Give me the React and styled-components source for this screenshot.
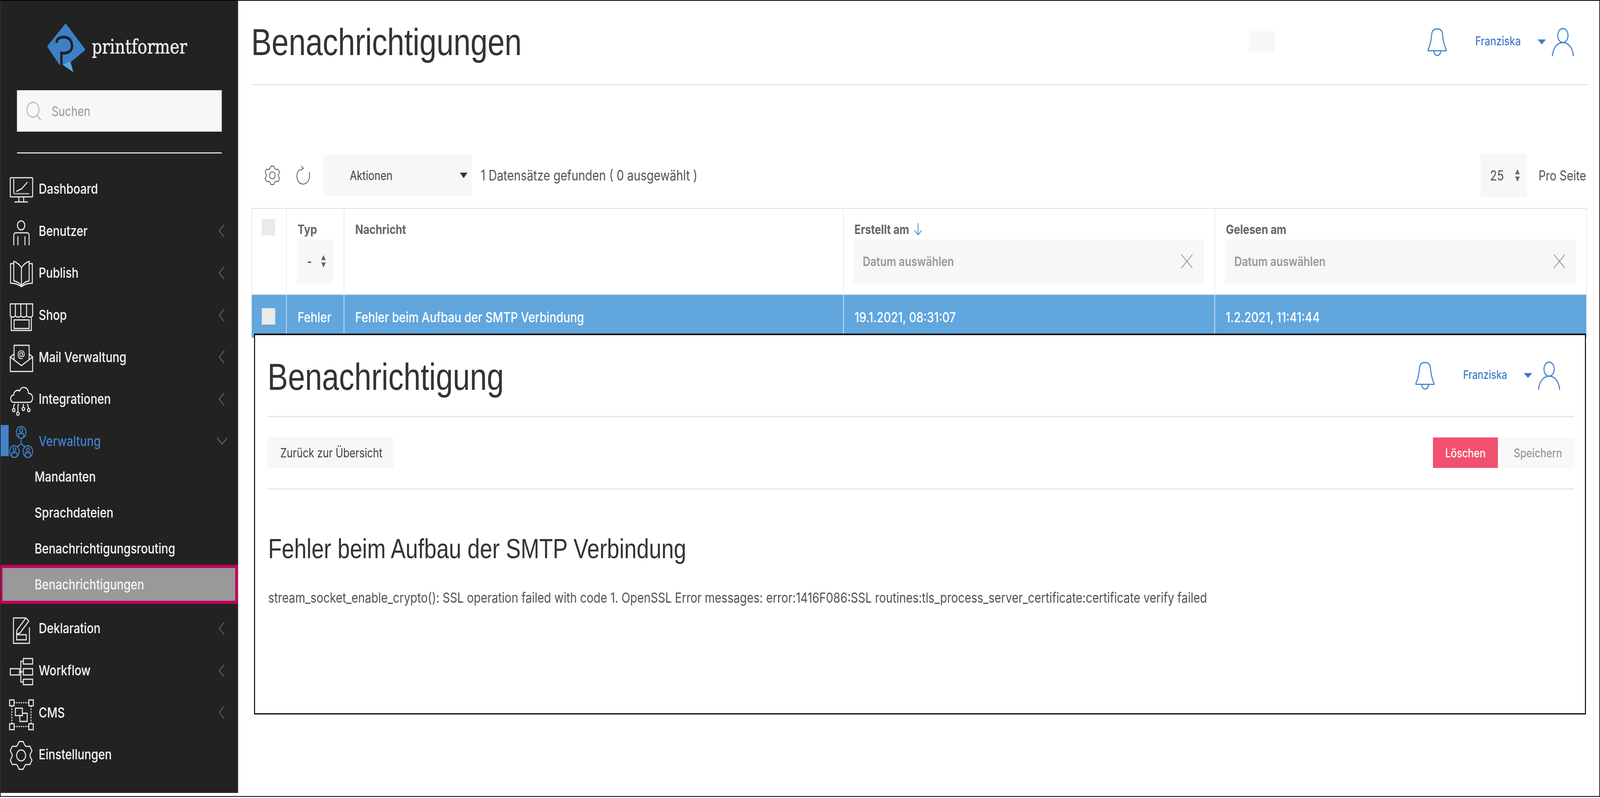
import React from "react";
import styled, { createGlobalStyle } from "styled-components";

const Global = createGlobalStyle`
  html, body { margin: 0; padding: 0; background: #fff; overflow: hidden; }
  body { font-family: Inter, "Liberation Sans", sans-serif; color: #555; }
  * { box-sizing: border-box; }
`;

const Stage = styled.div`width: 100vw; height: 100vh; overflow: hidden;`;
const Frame = styled.div`
  position: relative; display: flex; align-items: flex-start; transform-origin: 0 0;
  width: 5000px; height: 2040px; border: 2px solid #000; background: #fff; overflow: hidden;
`;
const Sidebar = styled.aside`
  flex: none; width: 742px; height: 2028px; background: #222; display: flex; flex-direction: column;
`;
const LogoRow = styled.div`
  display: flex; align-items: flex-start; height: 229px; padding: 50px 0 0 138px;
`;
const LogoMark = styled.svg`flex: none; width: 140px; height: 140px;`;
const LogoText = styled.span`
  font-family: "DejaVu Serif", serif; font-size: 50px; line-height: 60px; color: #f2f2f2;
  margin: 38px 0 0 7px; -webkit-text-stroke: 0.6px #f2f2f2;
`;
const SearchWrap = styled.div`
  display: flex; align-items: center; margin: 0 51px; height: 106px; background: #f7f7f7; padding-left: 29px;
`;
const SearchLabel = styled.span`font-size: 34px; color: #999; margin-left: 32px;`;
const Rule = styled.div`height: 3px; margin: 53px 51px 0; background: #ddd;`;
const Nav = styled.nav`display: flex; flex-direction: column; margin-top: 37px;`;
const NavRow = styled.div`
  position: relative; display: flex; align-items: center; height: 107.6px; padding-left: 27px;
  color: ${(p) => (p.$active ? "#3f80c8" : "#f4f4f4")}; font-size: 35.5px; font-weight: 500;
`;
const Marker = styled.span`
  position: absolute; left: 0; top: 12px; width: 25px; height: 80px; background: #4284c9;
`;
const NavIcon = styled.svg`
  flex: none; width: 76px; height: 76px; overflow: visible; fill: none;
  stroke: ${(p) => (p.$active ? "#3f80c8" : "#ececec")}; stroke-width: 3;
`;
const AtSign = styled.text`
  font-family: Inter, sans-serif; font-size: 24px; fill: #ececec; stroke: none; text-anchor: middle;
`;
const NavLabel = styled.span`margin-left: 16px; flex: 1;`;
const Chev = styled.svg`flex: none; margin-right: 40px; width: 22px; height: 36px; fill: none; stroke: #6f6f6f; stroke-width: 2.2;`;
const ChevDown = styled.svg`flex: none; margin-right: 32px; width: 36px; height: 22px; fill: none; stroke: #777; stroke-width: 2.2;`;
const SubList = styled.div`display: flex; flex-direction: column; margin: -9px 0 13px;`;
const SubRow = styled.div`
  display: flex; align-items: center; height: 92px; padding-left: 106px;
  font-size: 35.5px; font-weight: 500; color: #f4f4f4;
`;
const SubRowMarked = styled(SubRow)`
  height: 100px; margin: -4px 0 -4px -2px; width: 743px;
  background: #999; border: 8px solid #c2005c; padding-left: 100px;
`;

const Main = styled.main`
  flex: 1; min-width: 0; display: flex; flex-direction: column; padding: 0 35px 0 41px;
`;
const PageHead = styled.header`
  display: flex; align-items: center; height: 216px; border-bottom: 3px solid #e6e6e6; padding-bottom: 2px;
`;
const PageTitle = styled.h1`
  flex: 1; margin: 0; font-family: "Liberation Sans", Arial, sans-serif; font-weight: 400;
  font-size: 96px; color: #333; line-height: 120px; letter-spacing: -0.2px;
`;
const OverlayTitle = styled(PageTitle)`margin-top: 6px;`;
const Blank = styled.div`flex: none; width: 80px; height: 55px; background: #f7f7f7; margin-right: 478px;`;
const Bell = styled.svg`flex: none; width: 60px; height: 72px; fill: none; stroke: #3f80c8; stroke-width: 3.2; overflow: visible;`;
const UserName = styled.span`
  flex: none; color: #3f80c8; font-size: ${(p) => p.$size}px; font-weight: 500; margin: 0 0 6px 89px;
  width: ${(p) => p.$width}px; white-space: nowrap;
`;
const Caret = styled.svg`flex: none; width: 26px; height: 13px; fill: #3f80c8; margin-left: 50px;`;
const UserIcon = styled.svg`flex: none; width: 72px; height: 72px; fill: none; stroke: #3f80c8; stroke-width: 3.2; margin-left: 17px; margin-right: 43px; overflow: visible;`;

const Toolbar = styled.div`display: flex; align-items: center; margin-top: 178px; height: 106px;`;
const ToolIcon = styled.svg`flex: none; fill: none; stroke: #555; stroke-width: 2.2; width: 48px; height: 50px; margin-left: ${(p) => p.$gap}px; overflow: visible;`;
const ActionSelect = styled.div`
  flex: none; display: flex; align-items: center; justify-content: space-between;
  width: 464px; height: 106px; margin-left: 40px; background: #f7f7f7; padding: 0 14px 0 82px;
  font-size: 32px; color: #444; font-weight: 400;
`;
const BlackCaret = styled.svg`flex: none; width: 24px; height: 14px; fill: #333;`;
const Found = styled.span`flex: 1; margin-left: 27px; font-size: 36.2px; color: #555;`;
const PerPage = styled.div`
  flex: none; display: flex; align-items: center; width: 145px; height: 111px; background: #f7f7f7;
  padding-left: 29px; font-size: 36px; color: #555;
`;
const Updown = styled.svg`flex: none; width: 18px; height: 32px; fill: #666; margin-left: ${(p) => p.$gap}px;`;
const PerLabel = styled.span`flex: none; margin-left: 36px; font-size: 35px; color: #555; width: 155px; white-space: nowrap;`;

const Table = styled.div`
  margin: 30px 4px 0 0; border: solid #e8e8e8; border-width: 3px 2px 0 2px;
  display: grid; grid-template-columns: 107px 180px 1561px 1160px 1fr;
`;
const HeadCell = styled.div`
  height: 220px; padding: 32px ${(p) => p.$right || 33}px 0 ${(p) => p.$pad || 32}px;
  border-left: ${(p) => (p.$first ? 0 : "2px solid #e6e6e6")};
  border-bottom: 3px solid #e6e6e6;
`;
const CheckHead = styled(HeadCell)`padding: 26px 0 0 31px;`;
const Check = styled.div`width: 42px; height: 42px; background: #eaeaea;`;
const HeadLabel = styled.div`
  display: flex; align-items: center; height: 40px; font-size: 33px; font-weight: 700; color: #666; padding-left: 2px;
`;
const SortArrow = styled.svg`flex: none; width: 26px; height: 32px; fill: none; stroke: #4a8ccf; stroke-width: 2.4; margin-left: 15px;`;
const TypeFilter = styled.div`
  display: flex; align-items: center; width: 113px; height: 112px; margin-top: 6px; background: #f7f7f7;
  padding-left: 32px; font-size: 30px; color: #555; font-weight: 700;
`;
const DateFilter = styled.div`
  display: flex; align-items: center; justify-content: space-between; height: 112px; margin-top: 6px; background: #f7f7f7;
  padding: 0 35px 0 28px; font-size: 33px; font-weight: 600; color: #999;
`;
const XMark = styled.svg`flex: none; width: 36px; height: 36px; stroke: #888; stroke-width: 2; fill: none;`;
const BodyCell = styled.div`
  display: flex; align-items: flex-start; height: 110px; background: #61a6dc; color: #fff;
  font-size: 35.5px; font-weight: 500; padding: 36px 0 0 ${(p) => p.$pad || 34}px;
  border-left: ${(p) => (p.$first ? 0 : "2px solid #d3e6f6")};
`;
const BodyCheck = styled(BodyCell)`padding: 34px 0 0 31px;`;

const Overlay = styled.section`
  position: absolute; left: 792px; top: 852px; width: 4162px; height: 975px; background: #fff;
  border: 3px solid #000; border-top-width: 4px; display: flex; flex-direction: column; padding: 0 33px 0 39px;
`;
const OverHead = styled.header`
  display: flex; align-items: center; height: 210px; border-bottom: 3px solid #e6e6e6;
`;
const ButtonBar = styled.div`
  display: flex; align-items: center; height: 185px; border-bottom: 3px solid #e6e6e6;
`;
const BackButton = styled.div`
  flex: none; height: 79px; display: flex; align-items: center; padding: 0 40px; background: #f7f7f7;
  font-size: 32px; color: #444; width: 394px; white-space: nowrap; margin-right: auto;
`;
const Danger = styled.div`
  flex: none; height: 78px; width: 203px; display: flex; align-items: center; justify-content: center;
  background: #f25070; color: #fff; font-size: 31px; font-weight: 500;
`;
const Save = styled.div`
  flex: none; height: 78px; width: 228px; margin-left: 11px; display: flex; align-items: center; justify-content: center;
  background: #f8f8f8; color: #999; font-size: 31px; font-weight: 500;
`;
const Heading = styled.h2`
  margin: 110px 0 0; font-family: "Liberation Sans", Arial, sans-serif; font-weight: 400; font-size: 69.6px;
  line-height: 84px; color: #333; padding-left: 2px;
`;
const Message = styled.p`margin: 61px 0 0; font-size: 35.7px; line-height: 44px; color: #555; padding-left: 2px; white-space: nowrap;`;

function gearPath(cx, cy, R) {
  const pt = (deg, r) => {
    const a = (deg * Math.PI) / 180;
    return `${(cx + r * Math.cos(a)).toFixed(2)} ${(cy + r * Math.sin(a)).toFixed(2)}`;
  };
  let d = "";
  for (let i = 0; i < 6; i++) {
    const a = i * 60 - 90;
    d += `${i === 0 ? "M" : "L"}${pt(a - 20, R * 0.84)} L${pt(a - 10, R)} L${pt(a + 10, R)} L${pt(a + 20, R * 0.84)} Q${pt(a + 30, R * 0.72)} ${pt(a + 40, R * 0.84)} `;
  }
  return d + "Z";
}

const Person = ({ x, y }) => (
  <g>
    <circle cx={x} cy={y} r="15" />
    <circle cx={x} cy={y - 5} r="4.5" />
    <path d={`M${x - 8} ${y + 13} V${y + 3} H${x + 8} V${y + 13}`} />
  </g>
);

const icons = {
  Dashboard: (
    <>
      <rect x="3" y="9" width="70" height="49" rx="2" />
      <path d="M14 12V49" />
      <path d="M14 50H62" strokeWidth="3.6" stroke="#aaa" />
      <path d="M22 44L39 37L57 20" />
      <path d="M30 58V71M45 58V71M16 71H58" />
    </>
  ),
  Benutzer: (
    <>
      <circle cx="37" cy="24" r="11.5" />
      <path d="M14 75V50Q14 43 21 43H55Q62 43 62 50V75M27 52V75M49 52V75" />
    </>
  ),
  Publish: (
    <>
      <path d="M38 24Q28 12 14 8V58Q28 60 38 70Q48 60 62 58V8Q48 12 38 24ZM38 24V70" />
      <path d="M14 14H4V64Q24 64 38 73Q52 64 72 64V14H62" />
    </>
  ),
  Shop: (
    <>
      <path d="M3 9H73V40Q64 46 54 40Q45 46 36 40Q28 46 19 40Q10 46 3 40ZM19 9V40M36 9V40M54 9V40" />
      <path d="M6 44V77H69V44" />
      <rect x="15" y="50" width="47" height="22" />
    </>
  ),
  "Mail Verwaltung": (
    <>
      <path d="M15 30L3 38V75H73V38L62 30M3 38L38 60L73 38" />
      <path d="M15 45V8H62V45" />
      <AtSign x="37" y="38">@</AtSign>
    </>
  ),
  Integrationen: (
    <>
      <path d="M14 46C2 46 0 28 14 27C14 16 27 13 32 17C38 2 60 6 60 23C76 22 78 46 62 46Z" />
      <path d="M14 62V54L18 50M27 71V54L30 50M44 59V50M61 62L56 50" />
      <circle cx="14" cy="66" r="4" />
      <circle cx="27" cy="75" r="4" />
      <circle cx="44" cy="63" r="4" />
      <circle cx="61" cy="66" r="4" />
    </>
  ),
  Verwaltung: (
    <>
      <Person x={37} y={16} />
      <Person x={16} y={65} />
      <Person x={58} y={65} />
      <path d="M37 31V45L25 53M37 45L49 53" />
    </>
  ),
  Deklaration: (
    <>
      <path d="M50 11H13V76H63V35" />
      <path d="M24 42L52 11L61 19L33 50L23 52Z" />
      <rect x="23" y="54" width="30" height="13" />
    </>
  ),
  Workflow: (
    <>
      <rect x="3" y="33" width="29" height="16" />
      <rect x="44" y="7" width="29" height="14" />
      <rect x="44" y="33" width="29" height="16" />
      <rect x="44" y="60" width="29" height="14" />
      <path d="M44 14H36V67H44M32 41H44" />
    </>
  ),
  CMS: (
    <>
      <rect x="1" y="6" width="14" height="15" />
      <rect x="61" y="6" width="14" height="15" />
      <rect x="1" y="67" width="14" height="15" />
      <rect x="61" y="67" width="14" height="15" />
      <path d="M15 13H61M15 74H61M8 21V67M68 21V67" strokeDasharray="4 3" />
      <rect x="19" y="27" width="22" height="19" />
      <path d="M41 40H56V61H33V46" />
    </>
  ),
  Einstellungen: (
    <>
      <path d={gearPath(37, 40, 36)} />
      <circle cx="37" cy="40" r="14" />
    </>
  ),
};

const LeftChevron = () => (
  <Chev viewBox="0 0 22 36"><path d="M19 2L3 18L19 34" /></Chev>
);
const UpDown = ({ gap }) => (
  <Updown $gap={gap} viewBox="0 0 18 32"><path d="M9 0L16 13H2ZM2 19H16L9 32Z" /></Updown>
);
const CloseX = () => (
  <XMark viewBox="0 0 36 36"><path d="M1 1L35 35M35 1L1 35" /></XMark>
);
const UserBlock = ({ width, size }) => (
  <>
    <Bell viewBox="0 0 58 72">
      <path d="M1 58H57V54C52 46 47 30 46 16C45 6 38 2 29 2C20 2 13 6 12 16C11 30 6 46 1 54Z" />
      <path d="M19 58C19 74 40 74 40 58" />
    </Bell>
    <UserName $width={width} $size={size}>Franziska</UserName>
    <Caret viewBox="0 0 26 13"><path d="M0 0H26L13 13Z" /></Caret>
    <UserIcon viewBox="0 0 72 72">
      <ellipse cx="36" cy="19" rx="16" ry="18" />
      <path d="M3 72C5 50 19 37 36 37C53 37 67 50 69 72" />
    </UserIcon>
  </>
);

const MainItem = ({ label, chevron, active }) => (
  <NavRow $active={active}>
    {active && <Marker />}
    <NavIcon $active={active} viewBox="0 0 76 76">{icons[label]}</NavIcon>
    <NavLabel>{label}</NavLabel>
    {chevron && <LeftChevron />}
    {active && <ChevDown viewBox="0 0 36 22"><path d="M2 3L18 19L34 3" /></ChevDown>}
  </NavRow>
);

export default function App() {
  const fit = Math.min(1, window.innerWidth / 5000);
  return (
    <>
      <Global />
      <Stage>
        <Frame style={{ transform: `scaleX(${fit})` }}>
          <Sidebar>
            <LogoRow>
              <LogoMark viewBox="0 0 140 140">
                <path d="M65 12L11 67L50 114L80 104L123 75Z" fill="#3d80c6" stroke="#3d80c6" strokeWidth="6" strokeLinejoin="round" />
                <path d="M58 114L79 106L88 131Z" fill="#5aa9e3" stroke="#5aa9e3" strokeWidth="1.5" strokeLinejoin="round" />
                <path d="M37 58C36 47 47 43 60 43C76 43 85 53 85 66C85 80 72 85 52 84V120" fill="none" stroke="#222" strokeWidth="7.5" />
              </LogoMark>
              <LogoText>printformer</LogoText>
            </LogoRow>
            <SearchWrap>
              <svg width="47" height="48" viewBox="0 0 47 48" fill="none" stroke="#aaa" strokeWidth="2.4">
                <circle cx="21" cy="21" r="19" />
                <path d="M34 35L45 47" />
              </svg>
              <SearchLabel>Suchen</SearchLabel>
            </SearchWrap>
            <Rule />
            <Nav>
              <MainItem label="Dashboard" />
              <MainItem label="Benutzer" chevron />
              <MainItem label="Publish" chevron />
              <MainItem label="Shop" chevron />
              <MainItem label="Mail Verwaltung" chevron />
              <MainItem label="Integrationen" chevron />
              <MainItem label="Verwaltung" active />
              <SubList>
                <SubRow>Mandanten</SubRow>
                <SubRow>Sprachdateien</SubRow>
                <SubRow>Benachrichtigungsrouting</SubRow>
                <SubRowMarked>Benachrichtigungen</SubRowMarked>
              </SubList>
              <MainItem label="Deklaration" chevron />
              <MainItem label="Workflow" chevron />
              <MainItem label="CMS" chevron />
              <MainItem label="Einstellungen" />
            </Nav>
          </Sidebar>
          <Main>
            <PageHead>
              <PageTitle>Benachrichtigungen</PageTitle>
              <Blank />
              <UserBlock width={145} size={31} />
            </PageHead>
            <Toolbar>
              <ToolIcon $gap={42} viewBox="0 0 48 50">
                <path d={gearPath(24, 25, 24)} />
                <circle cx="24" cy="25" r="9" />
              </ToolIcon>
              <ToolIcon $gap={48} viewBox="0 0 48 50">
                <path d="M14 10C4 16 2 30 9 40C17 50 33 50 41 38C46 30 45 22 43 17" />
                <path d="M18 1L25 7L16 12" />
              </ToolIcon>
              <ActionSelect>
                Aktionen
                <BlackCaret viewBox="0 0 24 14"><path d="M0 0H24L12 14Z" /></BlackCaret>
              </ActionSelect>
              <Found>1 Datensätze gefunden ( 0 ausgewählt )</Found>
              <PerPage>
                25
                <UpDown gap={33} />
              </PerPage>
              <PerLabel>Pro Seite</PerLabel>
            </Toolbar>
            <Table>
              <CheckHead $first><Check /></CheckHead>
              <HeadCell>
                <HeadLabel>Typ</HeadLabel>
                <TypeFilter>-<UpDown gap={28} /></TypeFilter>
              </HeadCell>
              <HeadCell><HeadLabel>Nachricht</HeadLabel></HeadCell>
              <HeadCell $pad={31}>
                <HeadLabel>
                  Erstellt am
                  <SortArrow viewBox="0 0 26 32"><path d="M13 0V30M2 19L13 30L24 19" /></SortArrow>
                </HeadLabel>
                <DateFilter>Datum auswählen<CloseX /></DateFilter>
              </HeadCell>
              <HeadCell $pad={32} $right={31}>
                <HeadLabel>Gelesen am</HeadLabel>
                <DateFilter>Datum auswählen<CloseX /></DateFilter>
              </HeadCell>
              <BodyCheck $first><Check /></BodyCheck>
              <BodyCell>Fehler</BodyCell>
              <BodyCell>Fehler beim Aufbau der SMTP Verbindung</BodyCell>
              <BodyCell $pad={33}>19.1.2021, 08:31:07</BodyCell>
              <BodyCell $pad={33}>1.2.2021, 11:41:44</BodyCell>
            </Table>
          </Main>
          <Overlay>
            <OverHead>
              <OverlayTitle>Benachrichtigung</OverlayTitle>
              <UserBlock width={140} size={30} />
            </OverHead>
            <ButtonBar>
              <BackButton>Zurück zur Übersicht</BackButton>
              <Danger>Löschen</Danger>
              <Save>Speichern</Save>
            </ButtonBar>
            <Heading>Fehler beim Aufbau der SMTP Verbindung</Heading>
            <Message>stream_socket_enable_crypto(): SSL operation failed with code 1. OpenSSL Error messages: error:1416F086:SSL routines:tls_process_server_certificate:certificate verify failed</Message>
          </Overlay>
        </Frame>
      </Stage>
    </>
  );
}
